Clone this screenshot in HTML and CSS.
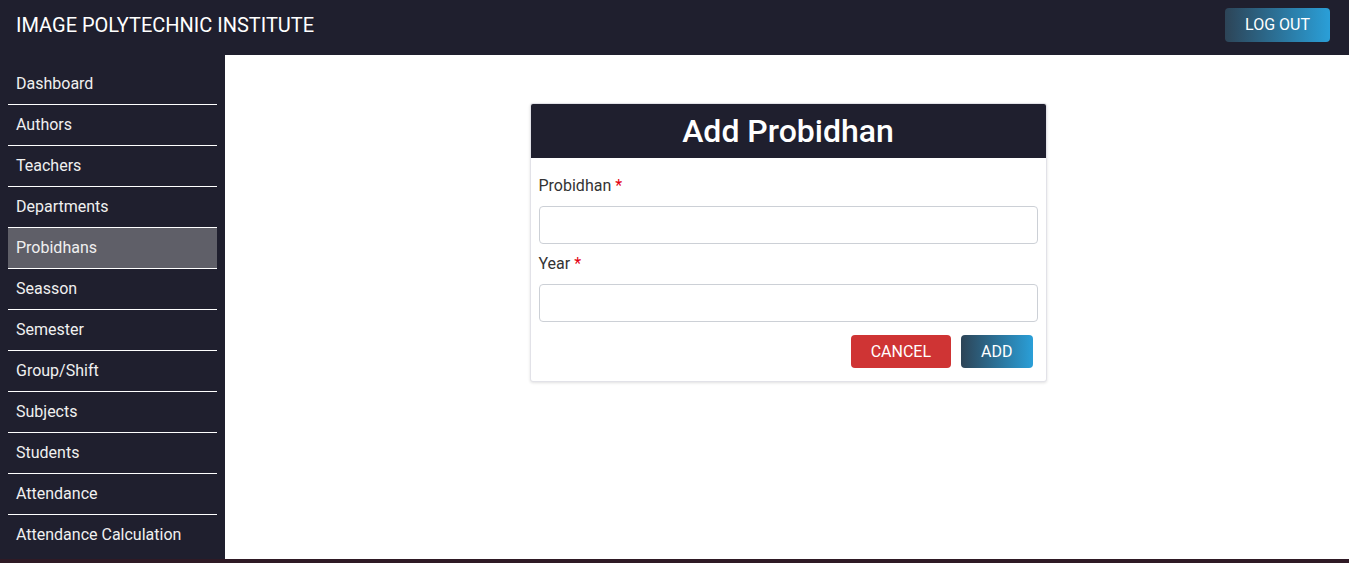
FILE: index.html
```html
<!DOCTYPE html>
<html>
<head>
<meta charset="utf-8">
<link rel="stylesheet" href="styles.css">
</head>
<body>
<div class="app">
  <header class="topbar">
    <div class="brand">IMAGE POLYTECHNIC INSTITUTE</div>
    <button class="btn btn-grad logout">LOG OUT</button>
  </header>
  <div class="layout">
    <nav class="sidebar">
      <a class="nav-item">Dashboard</a>
      <a class="nav-item">Authors</a>
      <a class="nav-item">Teachers</a>
      <a class="nav-item">Departments</a>
      <a class="nav-item active">Probidhans</a>
      <a class="nav-item">Seasson</a>
      <a class="nav-item">Semester</a>
      <a class="nav-item">Group/Shift</a>
      <a class="nav-item">Subjects</a>
      <a class="nav-item">Students</a>
      <a class="nav-item">Attendance</a>
      <a class="nav-item">Attendance Calculation</a>
    </nav>
    <main class="main">
      <div class="card">
        <div class="card-head">Add Probidhan</div>
        <div class="card-body">
          <div class="field">
            <label class="label">Probidhan <span class="req">*</span></label>
            <input class="input" type="text">
          </div>
          <div class="field">
            <label class="label">Year <span class="req">*</span></label>
            <input class="input" type="text">
          </div>
          <div class="actions">
            <button class="btn btn-cancel">CANCEL</button>
            <button class="btn btn-grad">ADD</button>
          </div>
        </div>
      </div>
    </main>
  </div>
</div>
</body>
</html>
```

FILE: styles.css
```css
* { box-sizing: border-box; }
html, body { margin: 0; padding: 0; }
body {
  background: #2f1a25;
  font-family: Roboto, "Noto Sans", sans-serif;
  height: 563px;
  overflow: hidden;
}
.app {
  height: 559px;
  display: flex;
  flex-direction: column;
}
.topbar {
  height: 55px;
  background: #1f1f2e;
  display: flex;
  align-items: flex-start;
  justify-content: space-between;
  padding: 0 19px 0 16px;
}
.brand {
  color: #fff;
  font-size: 20px;
  line-height: 24px;
  margin-top: 13px;
}
.btn {
  font-family: Roboto, sans-serif;
  font-size: 16px;
  color: #fff;
  border: 0;
  border-radius: 4px;
  padding: 0 20px;
  height: 33px;
  cursor: pointer;
}
.btn-grad {
  background: linear-gradient(to right, #2d4457, #2a9fd8);
}
.logout {
  margin-top: 8px;
  height: 34px;
  width: 105px;
  padding: 0 0 2px 0;
}
.layout {
  flex: 1;
  display: flex;
  min-height: 0;
}
.sidebar {
  width: 225px;
  background: #1f1f2e;
  padding: 9px 8px 0 8px;
  display: flex;
  flex-direction: column;
}
.nav-item {
  display: block;
  height: 41px;
  line-height: 40px;
  padding-left: 8px;
  color: #f0f0f0;
  font-size: 16px;
  border-bottom: 1px solid #fff;
}
.nav-item:last-child { border-bottom: 0; }
.nav-item.active { background: #5f5f68; }
.main {
  flex: 1;
  background: #fff;
  display: flex;
  justify-content: center;
  align-items: flex-start;
  padding-top: 48px;
  padding-left: 2px;
}
.card {
  width: 517px;
  border: 1px solid #e2e2e8;
  border-radius: 3px;
  box-shadow: 0 1px 3px rgba(0,0,0,0.12);
  background: #fff;
  overflow: hidden;
}
.card-head {
  background: #1f1f2e;
  color: #fff;
  height: 54px;
  line-height: 54px;
  text-align: center;
  font-size: 32px;
  font-weight: 500;
}
.card-body {
  padding: 16px 8px 13px 8px;
}
.field { margin-bottom: 8px; }
.label {
  display: block;
  font-size: 16px;
  line-height: 24px;
  color: #333;
  margin-bottom: 8px;
}
.req { color: #e3000f; }
.input {
  display: block;
  width: 100%;
  height: 38px;
  border: 1px solid #ccd0d6;
  border-radius: 4px;
  font-size: 16px;
  padding: 0 10px;
}
.actions {
  display: flex;
  justify-content: flex-end;
  gap: 10px;
  padding-right: 5px;
  margin-top: 13px;
}
.btn-cancel { background: #cf3434; }
```
